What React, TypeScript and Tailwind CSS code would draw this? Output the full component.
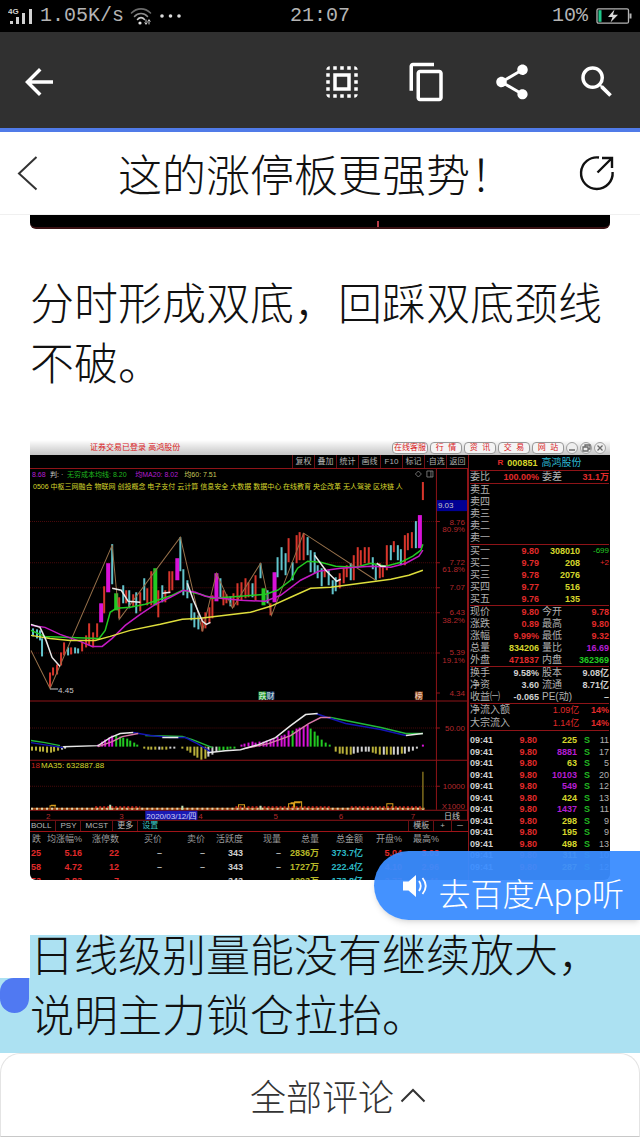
import React from 'react';
import { MdArrowBack, MdSelectAll, MdContentCopy, MdShare, MdSearch } from 'react-icons/md';

type Candle = [x: number, top: number, bottom: number, kind: string];

const KIND_COLORS: Record<string, string> = {
  r: '#d8362c',
  c: '#62c4cc',
  m: '#d812d8',
  g: '#22c922',
  y: '#b9b03a',
  w: '#d0d0d0',
};

// x, high, low, kind
const CANDLES: Candle[] = [
  [33, 628, 636, 'c'], [37, 629, 638, 'c'], [40, 630, 640, 'c'], [42, 638, 656, 'c'], [50, 672, 687, 'r'],
  [53, 667, 675, 'r'], [57, 664, 674, 'r'], [61, 652, 665, 'r'], [64, 642, 655, 'r'], [68, 647, 655, 'c'],
  [71, 647, 654, 'r'], [75, 647, 653, 'c'], [78, 648, 653, 'c'], [82, 642, 651, 'r'], [86, 635, 647, 'r'],
  [89, 623, 645, 'r'], [93, 632, 647, 'r'], [97, 623, 637, 'r'], [101, 603, 622, 'm'], [104, 586, 613, 'r'],
  [108, 563, 592, 'm'], [112, 544, 584, 'c'], [116, 593, 610, 'g'], [119, 597, 618, 'r'], [123, 585, 603, 'c'],
  [126, 590, 603, 'r'], [129, 590, 608, 'c'], [133, 594, 606, 'r'], [136, 592, 613, 'c'], [140, 592, 611, 'r'],
  [144, 578, 600, 'c'], [147, 588, 605, 'r'], [151, 571, 605, 'r'], [155, 568, 605, 'g'], [158, 590, 617, 'r'],
  [162, 585, 602, 'c'], [165, 590, 602, 'r'], [169, 571, 593, 'r'], [172, 571, 590, 'r'], [177, 558, 580, 'm'],
  [180, 537, 571, 'c'], [183, 569, 595, 'c'], [187, 580, 598, 'c'], [191, 603, 620, 'c'], [194, 612, 627, 'c'],
  [198, 615, 629, 'c'], [202, 618, 631, 'r'], [205, 612, 628, 'r'], [209, 607, 623, 'r'], [212, 595, 618, 'r'],
  [216, 573, 601, 'm'], [220, 578, 598, 'c'], [223, 590, 605, 'r'], [226, 594, 603, 'r'], [230, 596, 606, 'c'],
  [233, 593, 607, 'r'], [237, 583, 605, 'r'], [241, 582, 600, 'r'], [245, 578, 598, 'r'], [248, 582, 597, 'r'],
  [252, 583, 597, 'c'], [255, 575, 600, 'r'], [260, 563, 578, 'c'], [263, 588, 605, 'g'], [267, 590, 603, 'c'],
  [270, 603, 615, 'r'], [274, 572, 602, 'm'], [277, 557, 577, 'c'], [281, 547, 570, 'c'], [285, 553, 575, 'c'],
  [288, 538, 562, 'r'], [292, 562, 580, 'c'], [296, 535, 563, 'r'], [299, 532, 560, 'r'], [303, 533, 560, 'r'],
  [307, 537, 555, 'c'], [310, 550, 572, 'c'], [314, 552, 573, 'c'], [317, 565, 578, 'c'], [321, 568, 586, 'c'],
  [324, 568, 577, 'r'], [328, 570, 585, 'c'], [332, 580, 594, 'c'], [335, 577, 591, 'c'], [339, 573, 588, 'r'],
  [343, 568, 583, 'r'], [346, 565, 577, 'r'], [350, 563, 580, 'c'], [353, 555, 580, 'r'], [357, 547, 567, 'r'],
  [360, 550, 565, 'r'], [364, 547, 563, 'r'], [368, 547, 563, 'r'], [372, 557, 569, 'c'], [375, 565, 580, 'c'],
  [379, 563, 578, 'r'], [382, 565, 577, 'r'], [386, 545, 570, 'r'], [390, 545, 560, 'c'], [393, 541, 552, 'r'],
  [397, 545, 560, 'c'], [400, 549, 565, 'c'], [404, 535, 565, 'r'], [407, 533, 550, 'r'], [411, 532, 548, 'r'],
  [415, 521, 548, 'c'], [419, 515, 548, 'm'], [422, 482, 500, 'r'],
];

// MACD histogram, drawn from the zero line: x, signed height, kind
const HISTOGRAM: [number, number, string][] = [
  [32, -4, 'y'], [36, -4, 'y'], [40, -5, 'y'], [43, -5, 'y'], [47, -6, 'y'], [51, -6, 'y'], [54, -5, 'y'], [58, -4, 'y'], [62, -3, 'w'], [65, -2, 'w'],
  [98, 2, 'm'], [102, 5, 'm'], [105, 7, 'm'], [109, 9, 'm'], [112, 11, 'm'], [116, 11, 'g'], [120, 10, 'g'], [123, 9, 'g'], [127, 8, 'g'], [130, 6, 'g'], [134, 4, 'g'], [137, 2, 'g'],
  [144, -2, 'y'], [148, -3, 'y'], [151, -3, 'y'], [155, -3, 'y'], [159, -3, 'w'], [162, -3, 'y'], [166, -3, 'y'], [170, -2, 'w'], [174, -2, 'w'],
  [182, -2, 'y'], [187, -4, 'y'], [190, -6, 'y'], [194, -9, 'y'], [197, -11, 'y'], [201, -13, 'y'], [205, -12, 'y'], [208, -10, 'w'], [212, -8, 'w'], [216, -5, 'w'], [219, -4, 'g'], [223, -4, 'g'], [227, -3, 'g'], [230, -2, 'g'],
  [234, -2, 'g'], [241, 2, 'm'], [244, 3, 'm'], [248, 4, 'm'], [252, 5, 'm'], [255, 4, 'm'], [259, 5, 'm'], [263, 5, 'm'], [266, 6, 'm'], [270, 7, 'm'], [273, 8, 'm'],
  [277, 10, 'm'], [281, 11, 'm'], [284, 12, 'm'], [288, 16, 'm'], [292, 16, 'g'], [296, 18, 'm'], [299, 19, 'm'], [303, 20, 'm'], [307, 22, 'm'], [310, 18, 'g'], [314, 15, 'g'], [317, 11, 'g'], [321, 7, 'g'], [325, 4, 'g'], [329, 2, 'g'],
  [335, -5, 'y'], [339, -7, 'y'], [342, -7, 'y'], [346, -8, 'y'], [350, -8, 'y'], [353, -7, 'w'], [357, -6, 'w'], [361, -5, 'w'], [365, -5, 'w'], [368, -5, 'w'], [372, -6, 'y'], [375, -7, 'y'], [379, -8, 'y'], [383, -8, 'w'], [386, -8, 'y'],
  [390, -8, 'y'], [393, -8, 'w'], [397, -8, 'w'], [401, -7, 'y'], [404, -7, 'w'], [408, -5, 'w'], [412, -4, 'w'], [416, -2, 'w'], [422, 2, 'm'],
];

const AXIS_LABELS: [string, number][] = [
  ['8.76', 525], ['80.9%', 532], ['7.72', 565], ['61.8%', 572], ['7.07', 590], ['6.43', 615], ['38.2%', 623],
  ['5.39', 655], ['19.1%', 663], ['4.34', 695], ['50.00', 730], ['10000', 788], ['X1000', 808],
];

const MONTHS: [string, number][] = [['2', 46], ['3', 119], ['4', 198], ['5', 273], ['6', 338], ['7', 410]];

const MENU = ['复权', '叠加', '统计', '画线', 'F10', '标记', '·自选', '返回'];
const SITE_LINKS = ['在线客服', '行  情', '资  讯', '交  易', '网  站'];
const ASKS = ['卖五', '卖四', '卖三', '卖二', '卖一'];

const BIDS = [
  ['买一', '9.80', '308010', '-699'],
  ['买二', '9.79', '208', '+2'],
  ['买三', '9.78', '2076', ''],
  ['买四', '9.77', '516', ''],
  ['买五', '9.76', '135', ''],
];

const STATS = [
  ['现价', '9.80', 'text-[#e02a2a]', '今开', '9.78', 'text-[#e02a2a]'],
  ['涨跌', '0.89', 'text-[#e02a2a]', '最高', '9.80', 'text-[#e02a2a]'],
  ['涨幅', '9.99%', 'text-[#e02a2a]', '最低', '9.32', 'text-[#e02a2a]'],
  ['总量', '834206', 'text-[#d6d62c]', '量比', '16.69', 'text-[#b41ed2]'],
  ['外盘', '471837', 'text-[#e02a2a]', '内盘', '362369', 'text-[#22c922]'],
];

const FUNDAMENTALS = [
  ['换手', '9.58%', 'text-[#d0d0d0]', '股本', '9.08亿', 'text-[#d0d0d0]'],
  ['净资', '3.60', 'text-[#d0d0d0]', '流通', '8.71亿', 'text-[#d0d0d0]'],
  ['收益㈠', '-0.065', 'text-[#d0d0d0]', 'PE(动)', '–', 'text-[#d0d0d0]'],
];

const TRADES = [
  ['225', '11'], ['8881', '17'], ['63', '5'], ['10103', '20'], ['549', '12'], ['424', '13'],
  ['1437', '11'], ['298', '9'], ['195', '9'], ['498', '13'], ['311', '10'], ['287', '12'],
];
const BIG_TRADES = ['8881', '10103', '549', '1437'];

const SECTOR_COLUMNS = [
  { title: '跌', width: 'w-[11px]', color: 'text-[#e02a2a]' },
  { title: '均涨幅%', width: 'w-[41px]', color: 'text-[#e02a2a]' },
  { title: '涨停数', width: 'w-[37px]', color: 'text-[#e02a2a]' },
  { title: '买价', width: 'w-[43px]', color: 'text-[#b0b0b0]' },
  { title: '卖价', width: 'w-[43px]', color: 'text-[#b0b0b0]' },
  { title: '活跃度', width: 'w-[38px]', color: 'text-[#d0d0d0]' },
  { title: '现量', width: 'w-[38px]', color: 'text-[#b0b0b0]' },
  { title: '总量', width: 'w-[38px]', color: 'text-[#b8b828]' },
  { title: '总金额', width: 'w-[44px]', color: 'text-[#2cb8c4]' },
  { title: '开盘%', width: 'w-[39px]', color: 'text-[#e02a2a]' },
  { title: '最高%', width: 'w-[37px]', color: 'text-[#e02a2a]' },
];

const SECTOR_ROWS = [
  ['25', '5.16', '22', '–', '–', '343', '–', '2836万', '373.7亿', '5.04', '3.03'],
  ['58', '4.72', '12', '–', '–', '343', '–', '1727万', '222.4亿', '4.10', '2.96'],
  ['53', '3.83', '7', '–', '–', '343', '–', '1293万', '173.8亿', '3.77', '2.41'],
];

const StatusBar: React.FC = () => (
  <div className="flex h-8 items-center justify-between bg-black px-2 font-['Liberation_Mono',monospace] text-[20px] leading-none text-[#b4b4b4]">
    <div className="flex flex-1 items-center">
      <svg viewBox="0 0 26 20" className="mr-1.5 h-5 w-[26px]" fill="#d2d2d2">
        <text x="0" y="8" fontSize="8" fontWeight="700" fontFamily="Liberation Sans, sans-serif">4G</text>
        <rect x="2" y="15" width="3" height="3" />
        <rect x="8" y="11" width="3" height="7" />
        <rect x="14" y="7" width="3" height="11" />
        <rect x="21" y="3" width="3" height="15" />
      </svg>
      <span>1.05K/s</span>
      <svg viewBox="0 0 22 18" className="ml-1.5 h-[18px] w-[22px]" fill="none" strokeLinecap="round" strokeWidth="1.6">
        <path d="M1.5 6 C7 0.5 15 0.5 20.5 6" stroke="#6c6c6c" />
        <path d="M4.5 9.5 C8 5.5 14 5.5 17.5 9.5" stroke="#8c8c8c" />
        <path d="M7.5 12.5 C9.5 10 12.5 10 14.5 12.5" stroke="#c8c8c8" />
        <circle cx="10" cy="16" r="1.6" fill="#e6e6e6" />
        <path d="M16 13 v4 M14.8 15.8 l1.2 1.4 1.2 -1.4 M19 17 v-4 M17.8 14.2 l1.2 -1.4 1.2 1.4" stroke="#d0d0d0" strokeWidth="1" />
      </svg>
      <svg viewBox="0 0 21 4" className="ml-2 h-1 w-[21px]" fill="#dcdcdc">
        <circle cx="2" cy="2" r="1.8" />
        <circle cx="10.5" cy="2" r="1.8" />
        <circle cx="19" cy="2" r="1.8" />
      </svg>
    </div>
    <span>21:07</span>
    <div className="flex flex-1 items-center justify-end gap-2">
      <span>10%</span>
      <svg viewBox="0 0 36 16" className="h-4 w-9" fill="none">
        <rect x="1" y="0.8" width="31.5" height="14.4" rx="1.5" stroke="#b4b4b4" strokeWidth="1.3" />
        <rect x="2.5" y="2.2" width="3" height="11.6" fill="#1fc78a" />
        <rect x="33.5" y="5.5" width="2" height="5" fill="#b4b4b4" />
        <path d="M18.5 1.5 L12 9 h4.5 L14.5 14.5 L22 6.8 h-5 Z" fill="#d8d8d8" />
      </svg>
    </div>
  </div>
);

const Toolbar: React.FC = () => (
  <nav className="flex h-[100px] items-center justify-between border-b-4 border-[#507be8] bg-[#303030] pt-1 pr-[22px] pl-[18px] text-white">
    <button aria-label="返回"><MdArrowBack size={42} /></button>
    <div className="flex gap-[43px]">
      <button aria-label="全选"><MdSelectAll size={42} /></button>
      <button aria-label="复制"><MdContentCopy size={42} /></button>
      <button aria-label="分享"><MdShare size={42} /></button>
      <button aria-label="搜索"><MdSearch size={42} /></button>
    </div>
  </nav>
);

const PageHeader: React.FC = () => (
  <header className="flex h-[83px] items-center justify-between border-b border-[#f0f0f0] pr-6 pl-4">
    <button aria-label="后退" className="w-[38px]">
      <svg viewBox="0 0 24 36" className="h-9 w-6" fill="none" stroke="#333" strokeWidth="2">
        <path d="M20.5 2 L3 18.5 L20.5 34.5" />
      </svg>
    </button>
    <h1 className="text-[44px] leading-[60px] font-light whitespace-nowrap">这的涨停板更强势！</h1>
    <button aria-label="打开">
      <svg viewBox="0 0 38 38" className="size-[38px]" fill="none" stroke="#111" strokeWidth="2.4">
        <path d="M21 3.5 A15.8 15.8 0 1 0 34.6 18" />
        <path d="M19.5 18.5 L33.5 4.5 M24 4 H34 V14" />
      </svg>
    </button>
  </header>
);

const StockChart: React.FC = () => (
  <svg viewBox="30 468 437 352" className="block w-full" fontFamily="Liberation Sans, Noto Sans CJK SC, sans-serif" fontSize="8">
    <g stroke="#4a0a0c" strokeWidth="1" strokeDasharray="1 1">
      <path d="M30 521.5 H435 M30 562.5 H435 M30 587.5 H435 M30 612.5 H435 M30 652.5 H435 M30 727.5 H435 M30 785.5 H435" />
    </g>
    <g stroke="#8e1418" strokeWidth="1" fill="none">
      <path d="M30 468.5 H467 M30 700.5 H467 M30 759.5 H467 M30 809.5 H467 M30 819.5 H467" />
      <path d="M435.5 468 V809 M466.5 468 V820" />
      <path d="M435 521.5 h4 M435 562.5 h4 M435 587.5 h4 M435 612.5 h4 M435 652.5 h4 M435 692.5 h4 M435 727.5 h4 M435 785.5 h4" />
    </g>

    <g fontSize="7">
      <text x="32" y="477" fill="#b41ed2">8.68</text>
      <text x="50" y="477" fill="#c8c8c8">判: ·</text>
      <text x="67" y="477" fill="#1fb81f">无穷成本均线: 8.20</text>
      <text x="135" y="477" fill="#b41ed2">均MA20: 8.02</text>
      <text x="184" y="477" fill="#c8c85a">均60: 7.51</text>
      <text x="33" y="489" fill="#d6d62c">
        0506 中枢三网融合 物联网 创投概念 电子支付 云计算 信息安全 大数据 数据中心 在线教育 央企改革 无人驾驶 区块链 人
      </text>
    </g>
    <path d="M417.5 471 l3 3 -3 3 -3 -3 Z M426 471 h6 v6 h-6 Z M430 471 v6" fill="none" stroke="#8a8a8a" strokeWidth="0.8" />

    <rect x="436" y="500" width="30" height="11" fill="#000094" />
    <text x="437" y="508" fill="#c8c8c8">9.03</text>

    {CANDLES.map(([x, top, bottom, kind]) => (
      <rect
        key={x}
        x={kind === 'm' || kind === 'g' ? x - 2 : x - 1}
        y={top}
        width={kind === 'm' || kind === 'g' ? 4 : 2}
        height={bottom - top}
        fill={KIND_COLORS[kind]}
      />
    ))}

    <g fill="none" strokeWidth="1">
      <path stroke="#96704a" d="M31 650 L50 688 L112 545 L119 619 L180 537 L202 631 L216 573 L232 608 L260 563 L271 615 L303 533 L375 580" />
      <path stroke="#22c922" strokeWidth="1.5" d="M31 630 L45 636 L70 637 L99 638 L105 630 L110 612 L116 608 L130 607 L145 604 L160 599 L172 595 L182 590 L200 594 L212 598 L240 596 L265 594 L277 590 L290 580 L297 568 L307 561 L320 562 L335 566 L355 567 L370 563 L385 566 L400 562 L412 556 L420 550 L422 544" />
      <path stroke="#c41ac4" strokeWidth="1.5" d="M31 625 L45 627 L60 634 L80 641 L92 646 L102 646 L112 638 L125 625 L140 614 L155 604 L170 597 L183 590 L195 592 L205 596 L220 598 L240 600 L265 601 L280 595 L300 580 L318 571 L340 568 L370 566 L390 567 L405 563 L418 556 L422 550" />
      <path stroke="#dede3c" strokeWidth="1.5" d="M31 635 L50 638 L70 640 L95 640 L110 636 L130 630 L160 624 L182 619 L200 618 L225 615 L250 612 L270 606 L290 597 L310 588 L330 587 L360 583 L390 579 L408 575 L422 570" />
      <path stroke="#e8e8e8" strokeWidth="1.5" d="M31 624 L40 627 L46 640 L52 657 L60 666 M112 588 L121 590 L128 601 L140 602 M162 593 L170 592 M187 583 L193 600 L202 621 L206 624 L210 622 M314 555 L325 570 L336 581 L340 579 M376 563 L380 566 L385 566" />
    </g>
    <path d="M50 688.5 h8" stroke="#c8c8c8" strokeWidth="1" />
    <text x="58" y="692" fill="#c8c8c8">4.45</text>

    <g fontSize="8">
      <rect x="258" y="691" width="8" height="8" fill="#1c9a2c" />
      <rect x="266" y="691" width="8" height="8" fill="#123a72" />
      <text x="258" y="698" fill="#e0f0e0">跌财</text>
      <rect x="414" y="691" width="8" height="8" fill="#8a3a14" />
      <text x="414" y="698" fill="#f4e4d4">榜</text>
    </g>

    {HISTOGRAM.map(([x, height, kind]) => (
      <rect key={x} x={x - 1} y={height > 0 ? 746 - height : 746} width="2" height={Math.abs(height)} fill={KIND_COLORS[kind]} />
    ))}
    <g fill="none" strokeWidth="1.5">
      <path stroke="#22b83a" d="M31 740 L45 742 L60 745 M145 735 L182 736 L192 739 L212 747 M330 717 L350 721 L380 727 L405 733 L422 733" />
      <path stroke="#1414b4" d="M31 742 L50 745 L63 747 M133 732 L150 735 L170 737 L185 737 L197 743 L210 751 M315 713 L345 723 L380 729 L405 735" />
      <path stroke="#d87aa8" d="M98 746 L112 741 L122 736 L138 733 M243 748 L268 743 L290 735 L308 723 L320 717 L330 717" />
      <path stroke="#e8e8e8" d="M63 746 L98 745 L110 737 L120 733 L133 732 M162 737 L178 737 M207 752 L225 750 L240 749 L258 744 L275 737 L290 725 L305 714 L317 713 M405 735 L422 733" />
    </g>

    <text x="31" y="767" fill="#c8201c">18</text>
    <text x="41" y="767" fill="#d6d62c">MA35: 632887.88</text>
    <g strokeWidth="2" fill="none">
      <path d="M31 808 H424" stroke="#b4581e" />
      <path d="M31 808 H424" stroke="#e0d8b0" strokeWidth="2" strokeDasharray="2 3" />
      <path d="M95 806.5 H140 M235 806.5 H330 M350 806.5 H422" stroke="#c8281c" strokeDasharray="2 2" />
      <path d="M110 804 v5 M182 805 v4 M260 805 v4" stroke="#bfe0b4" />
      <path d="M422 771 V808" stroke="#7e6c1c" strokeWidth="1.5" />
    </g>
    <g fill="none" stroke="#d8a01c" strokeWidth="1">
      <path d="M50 807 v-2 h5 v2 M51 804.5 h5 M238 807 v-3 h6 v3 M288 807 v-4 h5 v4 M294 807 v-6 h7 v6 M290 802 h10 M386 807 v-4 h6 v4" />
    </g>

    <g fill="#b4282c">
      {AXIS_LABELS.map(([label, y]) => (
        <text key={label} x="464" y={y} textAnchor="end">{label}</text>
      ))}
      {MONTHS.map(([label, x]) => (
        <text key={label} x={x} y="818">{label}</text>
      ))}
    </g>
    <rect x="145" y="810" width="52" height="9" fill="#1a1ab4" />
    <text x="146" y="818" fill="#d0d0f0">2020/03/12/四</text>
    <text x="443" y="818" fill="#c8c8c8">日线</text>
  </svg>
);

const IndicatorTabs: React.FC = () => (
  <div className="flex h-[11px] items-center justify-between border-b border-[#a01418] text-[8px] leading-[10px] text-[#b8b8b8]">
    <div className="flex divide-x divide-[#6a1014] pl-px">
      <button className="pr-1">BOLL</button>
      <button className="px-1">PSY</button>
      <button className="px-1">MCST</button>
      <button className="px-1">更多</button>
      <button className="px-1 text-[#3cc8c8]">设置</button>
    </div>
    <div className="flex divide-x divide-[#6a1014] border-l border-[#6a1014]">
      <button className="px-1">模板</button>
      <button className="px-1.5">+</button>
      <button className="px-1">－</button>
    </div>
  </div>
);

const SectorTable: React.FC = () => (
  <table className="w-full table-fixed text-right text-[9px] leading-[14px] whitespace-nowrap">
    <thead>
      <tr className="text-[#9c9c9c]">
        {SECTOR_COLUMNS.map(col => (
          <th key={col.title} className={`${col.width} p-0 text-right font-normal`}>
            <span className="flex justify-end">{col.title}</span>
          </th>
        ))}
        <th className="p-0"></th>
      </tr>
    </thead>
    <tbody className="font-bold">
      {SECTOR_ROWS.map(row => (
        <tr key={row[0]}>
          {row.map((value, i) => (
            <td key={i} className={`p-0 ${SECTOR_COLUMNS[i].color}`}>
              <span className="flex justify-end">{value}</span>
            </td>
          ))}
          <td className="p-0"></td>
        </tr>
      ))}
    </tbody>
  </table>
);

const PairTable: React.FC<{ rows: string[][] }> = ({ rows }) => (
  <table className="w-full table-fixed border-b border-[#8e1418] text-[10px] leading-[12px] whitespace-nowrap text-[#b0b0b0]">
    <tbody>
      {rows.map(([label, value, color, label2, value2, color2]) => (
        <tr key={label}>
          <th className="w-[32px] p-0 text-left font-normal">{label}</th>
          <td className={`w-[37px] p-0 text-right text-[9px] font-bold ${color}`}>{value}</td>
          <th className="w-[32px] p-0 pl-[3px] text-left font-normal">{label2}</th>
          <td className={`p-0 text-right text-[9px] font-bold ${color2}`}>{value2}</td>
        </tr>
      ))}
    </tbody>
  </table>
);

const QuotePanel: React.FC = () => (
  <aside className="w-[142px] shrink-0 border-l border-[#8e1418] pr-px pl-px text-[10px] leading-[12px] text-[#b0b0b0]">
    <h3 className="flex h-[16px] items-center justify-center gap-1 border-b border-[#8e1418] font-bold">
      <span className="text-[8px] text-[#e02a2a]">R</span>
      <span className="text-[9px] text-[#d6d62c]">000851</span>
      <span className="font-normal text-[#2cb8d2]">高鸿股份</span>
    </h3>
    <PairTable rows={[['委比', '100.00%', 'text-[#e02a2a]', '委差', '31.1万', 'text-[#e02a2a]']]} />
    <ul className="border-b border-[#8e1418]">
      {ASKS.map(label => <li key={label}>{label}</li>)}
    </ul>
    <table className="w-full table-fixed border-b border-[#8e1418]">
      <tbody>
        {BIDS.map(([label, price, volume, delta]) => (
          <tr key={label}>
            <th className="w-[30px] p-0 text-left font-normal">{label}</th>
            <td className="w-[39px] p-0 text-right text-[9px] font-bold text-[#e02a2a]">{price}</td>
            <td className="w-[41px] p-0 text-right text-[9px] font-bold text-[#d6d62c]">{volume}</td>
            <td className={`p-0 text-right text-[8px] ${delta.startsWith('-') ? 'text-[#22c922]' : 'text-[#e02a2a]'}`}>{delta}</td>
          </tr>
        ))}
      </tbody>
    </table>
    <PairTable rows={STATS} />
    <PairTable rows={FUNDAMENTALS} />
    <table className="h-[27px] w-full border-b border-[#8e1418]">
      <tbody>
        <tr>
          <th className="p-0 text-left font-normal">净流入额</th>
          <td className="p-0 text-right text-[9px] text-[#e02a2a]">1.09亿</td>
          <td className="p-0 text-right text-[9px] font-bold text-[#e02a2a]">14%</td>
        </tr>
        <tr>
          <th className="p-0 text-left font-normal">大宗流入</th>
          <td className="p-0 text-right text-[9px] text-[#e02a2a]">1.14亿</td>
          <td className="p-0 text-right text-[9px] font-bold text-[#e02a2a]">14%</td>
        </tr>
      </tbody>
    </table>
    <table className="mt-1 h-[138px] w-full table-fixed text-right text-[9px] leading-[11px] font-bold">
      <tbody>
        {TRADES.map(([volume, count]) => (
          <tr key={volume}>
            <td className="w-[28px] p-0 text-left text-[#d0d0d0]">09:41</td>
            <td className="w-[39px] p-0 text-[#e02a2a]">9.80</td>
            <td className={`w-[40px] p-0 ${BIG_TRADES.includes(volume) ? 'text-[#b41ed2]' : 'text-[#d6d62c]'}`}>{volume}</td>
            <td className="w-[13px] p-0 text-[#22b822]">S</td>
            <td className="p-0 font-normal">{count}</td>
          </tr>
        ))}
      </tbody>
    </table>
  </aside>
);

const WindowBar: React.FC = () => (
  <div className="flex h-[15px] items-center justify-between bg-linear-to-b from-white to-[#c4c4c4] pr-1 pl-[60px] text-[8px] leading-[10px] text-[#d8201c]">
    <span>证券交易已登录 高鸿股份</span>
    <div className="flex items-center gap-[2px]">
      {SITE_LINKS.map(label => (
        <button key={label} className="w-[32px] rounded-[4px] border border-[#989898] bg-[#f4f4f4] whitespace-pre first:w-[36px]">{label}</button>
      ))}
      {['M3 8 H9', 'M3 5 h5 v4 h-5 Z M5 5 v-2 h5 v4 h-2', 'M3.5 3.5 L8.5 8.5 M8.5 3.5 L3.5 8.5'].map(d => (
        <svg key={d} viewBox="0 0 12 12" className="size-3" fill="#eeeeee" stroke="#6a6a6a">
          <circle cx="6" cy="6" r="5.5" stroke="#a0a0a0" />
          <path d={d} strokeWidth="1.3" />
        </svg>
      ))}
    </div>
  </div>
);

const TradingFigure: React.FC = () => (
  <figure className="h-[440px] overflow-hidden rounded-b-[6px] bg-black font-['Liberation_Sans','Noto_Sans_CJK_SC',sans-serif]">
    <WindowBar />
    <div className="flex">
      <div className="min-w-0 flex-1">
        <div className="flex h-[13px] justify-end text-[8px] leading-[13px] text-[#b0b0b0]">
          {MENU.map(label => (
            <button key={label} className="w-[22px] border-l border-[#6a1014] text-center whitespace-nowrap">{label}</button>
          ))}
        </div>
        <StockChart />
        <IndicatorTabs />
        <SectorTable />
      </div>
      <QuotePanel />
    </div>
  </figure>
);

const App: React.FC = () => {
  return (
    <div className="min-h-screen bg-white font-['Noto_Sans_CJK_SC',sans-serif] text-[#111]">
      <StatusBar />
      <Toolbar />
      <PageHeader />

      <main>
        <div className="px-[30px]">
          <div className="flex h-[14px] justify-center rounded-b-[6px] border-b-2 border-[#3a1214] bg-black pl-[115px]">
            <span className="mt-1.5 w-[2px] bg-[#b83c48]"></span>
          </div>
          <p className="mt-[42px] text-[44px] leading-[60px] font-light">分时形成双底，回踩双底颈线不破。</p>
        </div>

        <div className="relative mt-[49px] px-[30px]">
          <TradingFigure />
          <button className="absolute right-0 -bottom-10 flex h-[69px] items-center gap-2.5 rounded-l-full bg-[#3a8cff]/95 pr-4 pl-7 text-white shadow-md">
            <svg viewBox="0 0 26 26" className="size-[26px]" fill="white">
              <path d="M1 8.5 H6.5 L14 2 V24 L6.5 17.5 H1 Z" />
              <path d="M17 8 Q20.5 13 17 18 M20.5 5 Q27 13 20.5 21" fill="none" stroke="white" strokeWidth="1.8" />
            </svg>
            <span className="pt-3 text-[32px] leading-[40px] font-light">去百度App听</span>
          </button>
        </div>

        {/* selected paragraph with its drag handle */}
        <div className="relative mt-[55px] flex h-[118px] bg-[#ace1f2]">
          <div className="w-[30px] shrink-0">
            <div className="h-[43px] bg-white"></div>
            <div className="h-[35px] w-[29px] rounded-tl-[16px] rounded-b-[17px] bg-[#5079f2]"></div>
          </div>
          <p className="-mt-3 flex-1 pr-[30px] text-[44px] leading-[60px] font-light">日线级别量能没有继续放大，说明主力锁仓拉抬。</p>
        </div>
      </main>

      <button className="flex h-[84px] w-full items-center justify-center gap-[6px] rounded-t-[20px] border border-[#e4e4e4] border-b-[#c8c8c8] pl-[36px] text-[36px] leading-[60px] font-light text-[#333]">
        全部评论
        <svg viewBox="0 0 26 16" className="h-4 w-[26px]" fill="none" stroke="#333" strokeWidth="2">
          <path d="M1.5 14.5 L13 3 L24.5 14.5" />
        </svg>
      </button>
    </div>
  );
};

export default App;
